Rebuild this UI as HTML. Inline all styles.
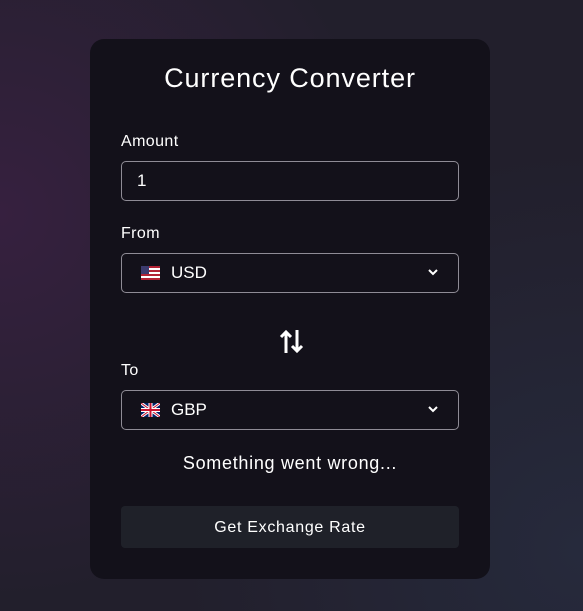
<!DOCTYPE html>
<html><head><meta charset="utf-8"><style>
*{box-sizing:border-box;margin:0;padding:0}
body{width:583px;height:611px;overflow:hidden;font-family:"Liberation Sans",sans-serif;color:#fff;
background:radial-gradient(circle at 0% 35%,#36203f 0%,transparent 55%),radial-gradient(circle at 100% 90%,#262a3c 0%,transparent 50%),#221f2c;position:relative}
.card{position:absolute;left:90px;top:39px;width:400px;height:540px;border-radius:14px;background:#13111a}
.lbl{position:absolute;left:121px;font-size:16px;letter-spacing:0.4px}
.box{position:absolute;left:121px;width:338px;height:40px;border:1px solid #8f8c96;border-radius:5px;font-size:17px;display:flex;align-items:center}
.chev{position:absolute;right:20px;top:14px}
.flag{margin-left:19px;margin-right:11px}
.btn{position:absolute;left:121px;top:506px;width:338px;height:42px;background:#1f2129;border-radius:4px;text-align:center;line-height:43px;font-size:16px;letter-spacing:0.7px}
</style></head><body>
<div class="card"></div>
<div style="position:absolute;left:90px;top:63px;width:400px;text-align:center;font-size:27px;letter-spacing:0.9px">Currency Converter</div>
<div class="lbl" style="top:133px">Amount</div>
<div class="box" style="top:161px"><span style="margin-left:15px">1</span></div>
<div class="lbl" style="top:225px">From</div>
<div class="box" style="top:253px"><svg class="flag" width="19" height="14" viewBox="0 0 19 14"><rect width="19" height="14" fill="#b22234"/><g fill="#fff"><rect y="2" width="19" height="2"/><rect y="6" width="19" height="2"/><rect y="10" width="19" height="2"/></g><rect width="8" height="8" fill="#3c3b6e"/></svg>USD
<svg class="chev" width="10" height="8" viewBox="0 0 10 8"><path d="M1 2l4 4 4-4" stroke="#fff" stroke-width="2" fill="none"/></svg></div>
<svg style="position:absolute;left:279px;top:329px" width="25" height="25" viewBox="0 0 25 25"><path d="M7 24V3M2 8l5-5 5 5M18 1v21M13 17l5 5 5-5" stroke="#fff" stroke-width="3" fill="none"/></svg>
<div class="lbl" style="top:362px">To</div>
<div class="box" style="top:390px"><svg class="flag" width="19" height="14" viewBox="0 0 19 14"><rect width="19" height="14" fill="#012169"/><path d="M0 0L19 14M19 0L0 14" stroke="#fff" stroke-width="3"/><path d="M0 0L19 14M19 0L0 14" stroke="#c8102e" stroke-width="1"/><path d="M9.5 0v14M0 7h19" stroke="#fff" stroke-width="4"/><path d="M9.5 0v14M0 7h19" stroke="#c8102e" stroke-width="2"/></svg>GBP
<svg class="chev" width="10" height="8" viewBox="0 0 10 8"><path d="M1 2l4 4 4-4" stroke="#fff" stroke-width="2" fill="none"/></svg></div>
<div style="position:absolute;left:90px;top:453px;width:400px;text-align:center;font-size:18px;letter-spacing:0.7px">Something went wrong...</div>
<div class="btn">Get Exchange Rate</div>
</body></html>
